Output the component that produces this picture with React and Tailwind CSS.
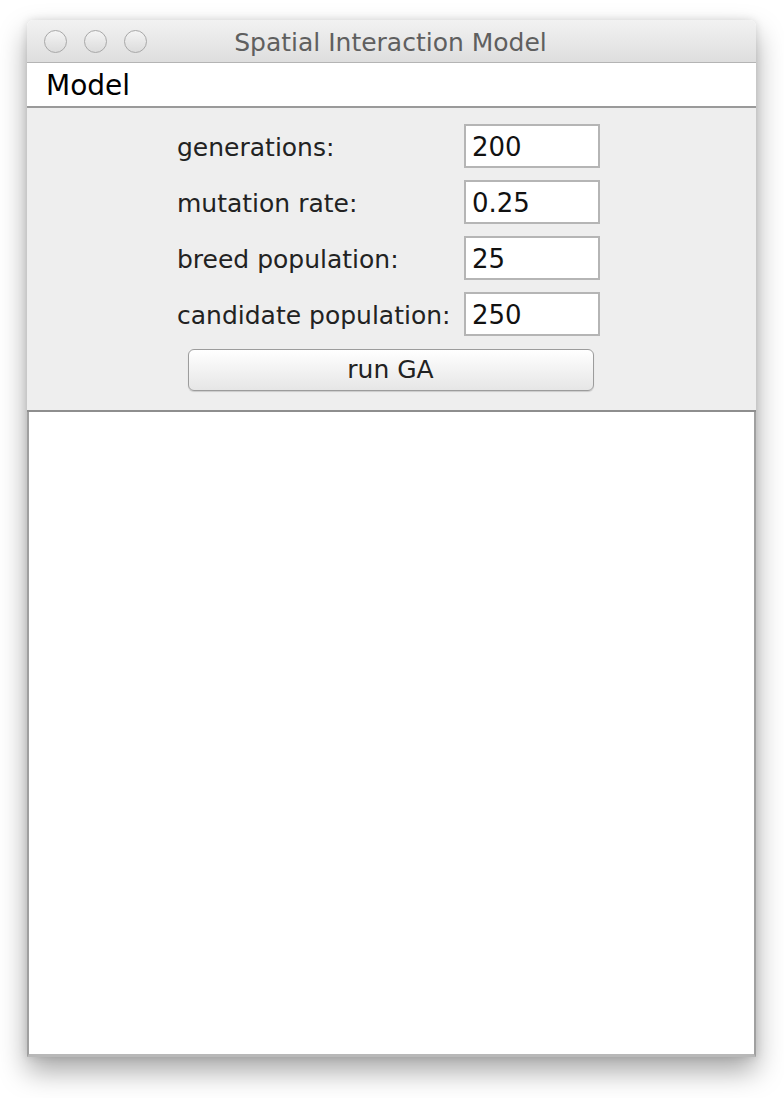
import React from 'react';

const fields = [
  { label: 'generations:', value: '200' },
  { label: 'mutation rate:', value: '0.25' },
  { label: 'breed population:', value: '25' },
  { label: 'candidate population:', value: '250' },
];

const Light = () => (
  <span className="block w-[23px] h-[23px] rounded-full border border-[#a8a8a8] bg-gradient-to-b from-[#f4f4f4] to-[#dcdcdc]" />
);

const App = () => {
  return (
    <div className="w-[784px] h-[1098px] bg-white pt-[20px] pl-[27px] font-['DejaVu_Sans',sans-serif]">
      <div className="w-[729px] h-[1037px] flex flex-col rounded-t-[6px] bg-white shadow-[0_14px_28px_rgba(0,0,0,0.35),0_0_8px_rgba(0,0,0,0.12)]">
        {/* title bar */}
        <div className="relative h-[43px] shrink-0 flex items-center px-[17px] gap-[17px] rounded-t-[6px] border-b border-[#b4b4b4] bg-gradient-to-b from-[#f2f2f2] to-[#dedede]">
          <Light />
          <Light />
          <Light />
          <div className="absolute inset-0 flex items-center justify-center pt-[4px] pr-[2px] text-[25px] text-[#5f5f5f]">
            Spatial Interaction Model
          </div>
        </div>

        {/* menu bar */}
        <div className="h-[45px] shrink-0 flex items-center px-[19px] pt-[3px] bg-white border-b-2 border-[#9a9a9a] text-[28px] text-black">
          Model
        </div>

        {/* form */}
        <div className="h-[304px] shrink-0 bg-[#eeeeee] border-b-2 border-[#8e8e8e] pt-[16px] flex flex-col items-center">
          <div className="flex flex-col gap-[12px] ml-[-6px]">
            {fields.map((f) => (
              <div key={f.label} className="flex items-center">
                <span className="w-[287px] pt-[3px] text-[25px] text-[#222]">{f.label}</span>
                <input
                  readOnly
                  value={f.value}
                  className="w-[136px] h-[44px] border-2 border-[#b5b5b5] bg-white px-[6px] pt-[2px] text-[26px] text-[#111] outline-none"
                />
              </div>
            ))}
          </div>
          <button className="mt-[13px] ml-[-2px] w-[406px] h-[42px] rounded-[6px] border border-[#9c9c9c] bg-gradient-to-b from-white to-[#e6e6e6] text-[25px] text-[#222] shadow-[0_1px_1px_rgba(0,0,0,0.15)]">
            run GA
          </button>
        </div>

        {/* canvas */}
        <div className="flex-1 bg-white border-x-2 border-[#a0a0a0] border-b-[3px] border-b-[#b8b8b8]" />
      </div>
    </div>
  );
};

export default App;
